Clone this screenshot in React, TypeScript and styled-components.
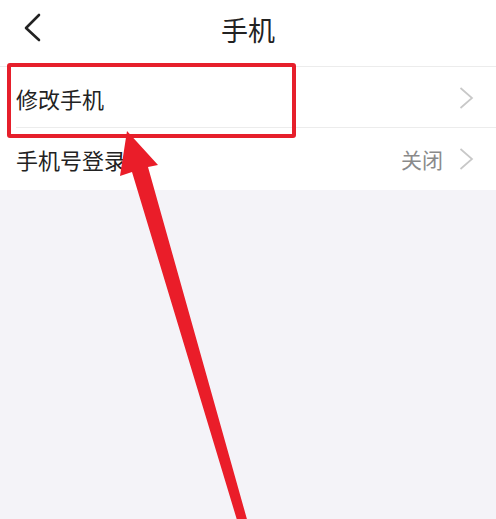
import React from 'react';
import styled, { createGlobalStyle } from 'styled-components';

const GlobalStyle = createGlobalStyle`
  html, body {
    margin: 0;
    padding: 0;
    background-color: #f4f3f8;
    font-family: "Noto Sans CJK SC", "Noto Sans", sans-serif;
  }
`;

const Page = styled.div`
  position: relative;
  width: 496px;
  height: 519px;
  overflow: hidden;
  background-color: #f4f3f8;
`;

const Header = styled.div`
  position: relative;
  height: 67px;
  display: flex;
  align-items: center;
  justify-content: center;
  background-color: #fff;
  border-bottom: 1px solid #ececec;
  box-sizing: border-box;
`;

const BackButton = styled.div`
  position: absolute;
  left: 20px;
  top: 12px;
  width: 26px;
  height: 32px;
`;

const Title = styled.div`
  font-size: 27px;
  color: #222;
  line-height: 1;
  margin-top: -8px;
`;

const List = styled.div`
  background-color: #fff;
`;

const Row = styled.div<{ $divider?: boolean; $height: number }>`
  position: relative;
  display: flex;
  align-items: center;
  height: ${(p) => p.$height}px;
  padding: 0 22px 0 16px;
  box-sizing: border-box;
  &::after {
    content: '';
    display: ${(p) => (p.$divider ? 'block' : 'none')};
    position: absolute;
    left: 16px;
    right: 0;
    bottom: 0;
    height: 1px;
    background-color: #ececec;
  }
`;

const Label = styled.span`
  flex: 1;
  font-size: 22px;
  color: #222;
  line-height: 1;
`;

const Value = styled.span`
  font-size: 21px;
  color: #8a8a8a;
  line-height: 1;
  margin-right: 16px;
`;

// red annotation drawn over the first row
const Highlight = styled.div`
  position: absolute;
  left: 7px;
  top: 63px;
  width: 289px;
  height: 75px;
  border: 4px solid #e61f2b;
  border-radius: 3px;
  box-sizing: border-box;
`;

const ArrowLayer = styled.svg`
  position: absolute;
  left: 0;
  top: 0;
`;

const Chevron = () => (
  <svg width="15" height="22" viewBox="0 0 15 22">
    <polyline points="1.5,1 13,11 1.5,21" fill="none" stroke="#c8c8c8" strokeWidth="1.7" />
  </svg>
);

const App: React.FC = () => {
  return (
    <>
      <GlobalStyle />
      <Page>
        <Header>
          <BackButton>
            <svg width="26" height="32" viewBox="0 0 26 32">
              <polyline points="19,3 6,16 19,28" fill="none" stroke="#222" strokeWidth="2.6" strokeLinecap="round" strokeLinejoin="round" />
            </svg>
          </BackButton>
          <Title>手机</Title>
        </Header>
        <List>
          <Row $divider $height={61}>
            <Label>修改手机</Label>
            <Chevron />
          </Row>
          <Row $height={62}>
            <Label>手机号登录</Label>
            <Value>关闭</Value>
            <Chevron />
          </Row>
        </List>

        <Highlight />
        <ArrowLayer width="496" height="519" viewBox="0 0 496 519">
          <polygon
            points="127,131 158,165 148,167 250,530 240,530 132,172 120,176"
            fill="#ea1d29"
          />
        </ArrowLayer>
      </Page>
    </>
  );
};

export default App;
